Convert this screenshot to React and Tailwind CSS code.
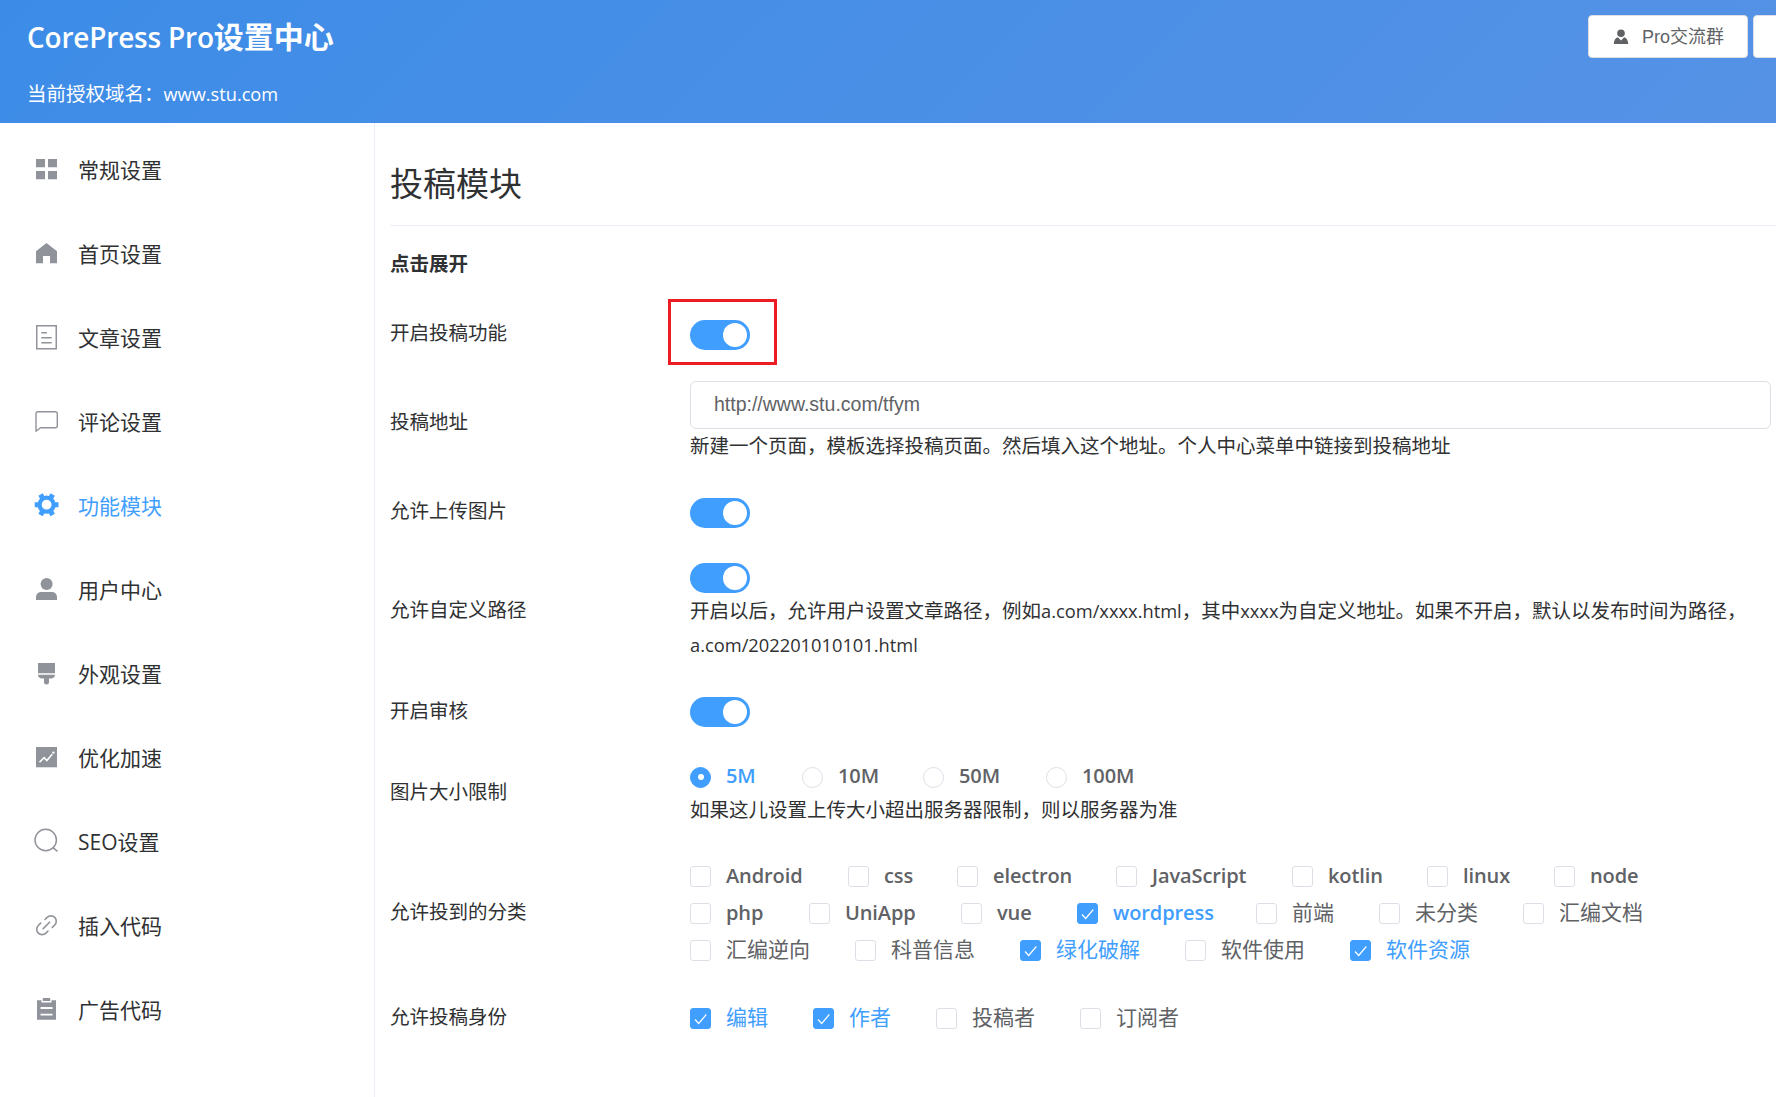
import React, { useState } from "react";

const icons = {
  menu: (
    <path
      fill="currentColor"
      d="M3 3h9v8.3H3zM15 3h9v8.3h-9zM3 15h9v8.3H3zM15 15h9v8.3h-9z"
    />
  ),
  home: (
    <path
      fill="currentColor"
      d="M13.5 3 24 11.2V23.3h-7V16h-7v7.3H3V11.2z"
    />
  ),
  tickets: (
    <g fill="none" stroke="currentColor" strokeWidth="1.5">
      <path d="M3.75 1.75h19.5v23H3.75z" />
      <path d="M8.3 8.7H14M8.3 13.7h10.4M8.3 18.7h10.4" />
    </g>
  ),
  chat: (
    <path
      fill="none"
      stroke="currentColor"
      strokeWidth="1.4"
      strokeLinejoin="round"
      d="M5 3.7h17.3a2 2 0 0 1 2 2v12a2 2 0 0 1-2 2H7.5L3 23.3V5.7a2 2 0 0 1 2-2z"
    />
  ),
  gear: (
    <g fill="none" stroke="currentColor">
      <circle cx="13.6" cy="12.7" r="7" strokeWidth="4.2" />
      <path
        strokeWidth="5"
        d="M1.7 12.7h4.5M21 12.7h4.5M7.5 2.4l2.2 3.8M19.7 2.4l-2.2 3.8M7.5 23l2.2-3.8M19.7 23l-2.2-3.8"
      />
    </g>
  ),
  user: (
    <g fill="currentColor">
      <circle cx="13.6" cy="8" r="6" />
      <path d="M3 24v-3a5 5 0 0 1 5-5h11a5 5 0 0 1 5 5v3z" />
    </g>
  ),
  brush: (
    <path
      fill="currentColor"
      d="M5 3h17v10.3H5zM5 14.8h17c0 2-1.4 3.6-3.4 3.6H16V22a2.5 2.5 0 0 1-5 0v-3.6H8.4C6.4 18.4 5 16.8 5 14.8z"
    />
  ),
  chart: (
    <>
      <path fill="currentColor" d="M3 3h21v20.3H3z" />
      <path
        fill="none"
        stroke="#fff"
        strokeWidth="1.6"
        d="M6.5 18.2l4.6-4.6 2.8 2.9 5.3-6.2"
      />
      <circle cx="20.4" cy="8.6" r="1.2" fill="#fff" />
    </>
  ),
  search: (
    <g fill="none" stroke="currentColor" strokeWidth="1.5">
      <circle cx="12.7" cy="12" r="10.7" />
      <path d="M19.8 19.4l4.6 4" />
    </g>
  ),
  link: (
    <g
      fill="none"
      stroke="currentColor"
      strokeWidth="1.6"
      strokeLinecap="round"
    >
      <path d="M12 7.5l2.1-2.1a5.3 5.3 0 0 1 7.6 7.6l-2.4 2.4" />
      <path d="M15 19l-2.1 2.1a5.3 5.3 0 0 1-7.6-7.6l2.4-2.4" />
      <path d="M10.2 16.6l6.4-6.4" />
    </g>
  ),
  order: (
    <>
      <path
        fill="currentColor"
        d="M4 4.2h4.5v2.3h10V4.2H23v19.6H4zM9.8 2h7.4v2.900H9.800z"
      />
      <path stroke="#fff" strokeWidth="1.8" d="M7.5 12h12M7.5 18.7h12" />
    </>
  ),
};

const menus = [
  { icon: "menu", text: "常规设置" },
  { icon: "home", text: "首页设置" },
  { icon: "tickets", text: "文章设置" },
  { icon: "chat", text: "评论设置" },
  { icon: "gear", text: "功能模块" },
  { icon: "user", text: "用户中心" },
  { icon: "brush", text: "外观设置" },
  { icon: "chart", text: "优化加速" },
  { icon: "search", text: "SEO设置" },
  { icon: "link", text: "插入代码" },
  { icon: "order", text: "广告代码" },
];

const sizes = [
  { text: "5M", width: "w-[112px]" },
  { text: "10M", width: "w-[121px]" },
  { text: "50M", width: "w-[123px]" },
  { text: "100M", width: "w-[123px]" },
];

const categoryRows = [
  [
    { text: "Android", width: "w-[158px]" },
    { text: "css", width: "w-[109px]" },
    { text: "electron", width: "w-[159px]" },
    { text: "JavaScript", width: "w-[176px]" },
    { text: "kotlin", width: "w-[135px]" },
    { text: "linux", width: "w-[127px]" },
    { text: "node", width: "w-[127px]" },
  ],
  [
    { text: "php", width: "w-[119px]" },
    { text: "UniApp", width: "w-[152px]" },
    { text: "vue", width: "w-[116px]" },
    { text: "wordpress", width: "w-[179px]" },
    { text: "前端", width: "w-[123px]" },
    { text: "未分类", width: "w-[144px]" },
    { text: "汇编文档", width: "w-[165px]" },
  ],
  [
    { text: "汇编逆向", width: "w-[165px]" },
    { text: "科普信息", width: "w-[165px]" },
    { text: "绿化破解", width: "w-[165px]" },
    { text: "软件使用", width: "w-[165px]" },
    { text: "软件资源", width: "w-[165px]" },
  ],
];

const roles = [
  { text: "编辑", width: "w-[123px]" },
  { text: "作者", width: "w-[123px]" },
  { text: "投稿者", width: "w-[144px]" },
  { text: "订阅者", width: "w-[144px]" },
];

const Switch = () => {
  const [on, setOn] = useState(true);
  return (
    <button
      type="button"
      onClick={() => setOn(!on)}
      className={`flex h-[30px] w-[60px] shrink-0 cursor-pointer items-center rounded-full px-[3px] ${
        on ? "justify-end bg-[#409eff]" : "justify-start bg-[#dcdfe6]"
      }`}
    >
      <span className="size-6 rounded-full bg-white" />
    </button>
  );
};

const labelFont = (text) =>
  /^[\w]+$/.test(text)
    ? "mb-[2px] text-[20px] font-semibold tracking-[-0.1px]"
    : "mb-[3px] text-[21px]";

const Checkbox = ({ text, width, checked, onChange }) => (
  <label className={`flex h-[37px] cursor-pointer items-center ${width}`}>
    <input
      type="checkbox"
      className="sr-only"
      checked={checked}
      onChange={onChange}
    />
    <span
      className={`flex size-[21px] shrink-0 items-center justify-center rounded-[3px] border ${
        checked ? "border-[#409eff] bg-[#409eff]" : "border-[#dcdfe6] bg-white"
      }`}
    >
      {checked ? (
        <svg width="19" height="19" fill="none" stroke="#fff">
          <path strokeWidth="1.2" d="M4 10.5l3.7 4 7.6-9" />
        </svg>
      ) : null}
    </span>
    <span
      className={`pl-[15px] leading-[34px] whitespace-nowrap ${labelFont(text)} ${
        checked ? "text-[#409eff]" : "text-[#606266]"
      }`}
    >
      {text}
    </span>
  </label>
);

const Row = ({ label, height, children }) => (
  <div className={`flex items-center ${height}`}>
    <div className="w-[300px] shrink-0">{label}</div>
    <div className="min-w-0 flex-1">{children}</div>
  </div>
);

const App = () => {
  const [active, setActive] = useState("功能模块");
  const [url, setUrl] = useState("http://www.stu.com/tfym");
  const [size, setSize] = useState("5M");
  const [checked, setChecked] = useState([
    "wordpress",
    "绿化破解",
    "软件资源",
    "编辑",
    "作者",
  ]);

  const toggle = (text) => {
    setChecked(
      checked.includes(text)
        ? checked.filter((t) => t !== text)
        : [...checked, text]
    );
  };

  return (
    <div className="flex h-[1097px] w-full flex-col overflow-hidden bg-white font-['Open_Sans','Noto_Sans_CJK_SC',sans-serif] text-[19.5px] text-[#303133]">
      <header className="flex h-[123px] shrink-0 justify-between bg-linear-135 from-[#3c8ce7] to-[#5592e6] pl-[27px] text-white">
        <div>
          <h1 className="mt-[16px] text-[30px] leading-[42px] font-bold">
            <span className="text-[28px] font-semibold tracking-[-0.2px]">
              CorePress Pro
            </span>
            设置中心
          </h1>
          <div className="mt-[19px] leading-[34px]">
            当前授权域名：<span className="text-[18.2px]">www.stu.com</span>
          </div>
        </div>
        <div className="flex w-[188px] gap-[5px] overflow-hidden pt-[15px]">
          <button
            type="button"
            className="flex h-[43px] w-[160px] shrink-0 cursor-pointer items-center rounded-[4px] border border-[#dcdfe6] bg-white pl-[24px] font-['Liberation_Sans','Noto_Sans_CJK_SC',sans-serif] text-[18px] text-[#606266]"
          >
            <svg width="16" height="16" fill="currentColor" className="mr-[13px]">
              <circle cx="8" cy="4.2" r="3.8" />
              <path d="M.8 15c0-3.500 1.700-6 4-6.700L8 11.500l3.200-3.200c2.300.7 4 3.200 4 6.700z" />
            </svg>
            <span className="pt-px">Pro交流群</span>
          </button>
          <button
            type="button"
            className="h-[43px] w-[160px] shrink-0 cursor-pointer rounded-[4px] border border-[#dcdfe6] bg-white"
          />
        </div>
      </header>

      <div className="flex min-h-0 flex-1">
        <nav className="w-[375px] shrink-0 border-r border-[#ebeef5] pt-[6px]">
          {menus.map((m) => (
            <div
              key={m.text}
              onClick={() => setActive(m.text)}
              className={`flex h-[84px] cursor-pointer items-center pl-[33px] text-[21px] ${
                active === m.text ? "text-[#409eff]" : ""
              }`}
            >
              <svg
                width="27"
                height="27"
                className={`mr-[18px] mb-[3px] ${
                  active === m.text ? "" : "text-[#909399]"
                }`}
              >
                {icons[m.icon]}
              </svg>
              {m.text}
            </div>
          ))}
        </nav>

        <main className="min-w-0 flex-1 pl-[15px]">
          <h2 className="flex h-[103px] items-center border-b border-[#ebeef5] pt-[20px] text-[33px]">
            投稿模块
          </h2>
          <div className="flex h-[64px] items-center pt-[11px] font-bold">
            点击展开
          </div>

          <div className="pr-[5px]">
            <Row label="开启投稿功能" height="h-[86px]">
              <div className="mb-[2px] -ml-[22px] flex h-[66px] w-[109px] items-center border-[3px] border-[#ed1c24] pt-[6px] pl-[19px]">
                <Switch />
              </div>
            </Row>
            <Row label="投稿地址" height="h-[91px]">
              <input
                type="text"
                value={url}
                onChange={(e) => setUrl(e.target.value)}
                className="block h-[48px] w-full rounded-[6px] border border-[#dcdfe6] px-[23px] font-['Liberation_Sans',sans-serif] text-[19.5px] text-[#606266] focus:outline-none"
              />
              <p className="leading-[34px]">
                新建一个页面，模板选择投稿页面。然后填入这个地址。个人中心菜单中链接到投稿地址
              </p>
            </Row>
            <Row label="允许上传图片" height="h-[88px]">
              <div className="pt-1">
                <Switch />
              </div>
            </Row>
            <Row label="允许自定义路径" height="h-[110px]">
              <div className="pt-[4px] pb-px">
                <Switch />
              </div>
              <p className="leading-[34px]">
                开启以后，允许用户设置文章路径，例如
                <span className="text-[18.3px]">a.com/xxxx.html</span>，其中
                <span className="text-[18.3px]">xxxx</span>
                为自定义地址。如果不开启，默认以发布时间为路径，
                <br />
                <span className="text-[18.3px]">a.com/202201010101.html</span>
              </p>
            </Row>
            <Row label="开启审核" height="h-[92px]">
              <div className="pt-[2px]">
                <Switch />
              </div>
            </Row>
            <Row label="图片大小限制" height="h-[70px]">
              <div className="flex pt-[3px]">
                {sizes.map((s) => (
                  <label
                    key={s.text}
                    className={`flex h-[32px] cursor-pointer items-center ${s.width}`}
                  >
                    <input
                      type="radio"
                      name="size"
                      className="sr-only"
                      checked={size === s.text}
                      onChange={() => setSize(s.text)}
                    />
                    <span
                      className={`mt-px flex size-[21px] shrink-0 items-center justify-center rounded-full border ${
                        size === s.text
                          ? "border-[#409eff] bg-[#409eff]"
                          : "border-[#dcdfe6] bg-white"
                      }`}
                    >
                      <span className="size-[6px] rounded-full bg-white" />
                    </span>
                    <span
                      className={`mb-[2px] pl-[15px] text-[20px] font-semibold tracking-[-0.1px] ${
                        size === s.text ? "text-[#409eff]" : "text-[#606266]"
                      }`}
                    >
                      {s.text}
                    </span>
                  </label>
                ))}
              </div>
              <p className="leading-[34px]">
                如果这儿设置上传大小超出服务器限制，则以服务器为准
              </p>
            </Row>
            <div className="pt-4">
              <Row label="允许投到的分类" height="h-[138px]">
                <div className="pt-[3px]">
                  {categoryRows.map((row, i) => (
                    <div key={i} className="flex">
                      {row.map((c) => (
                        <Checkbox
                          key={c.text}
                          {...c}
                          checked={checked.includes(c.text)}
                          onChange={() => toggle(c.text)}
                        />
                      ))}
                    </div>
                  ))}
                </div>
              </Row>
            </div>
            <Row label="允许投稿身份" height="h-[72px]">
              <div className="flex pt-[2px]">
                {roles.map((r) => (
                  <Checkbox
                    key={r.text}
                    {...r}
                    checked={checked.includes(r.text)}
                    onChange={() => toggle(r.text)}
                  />
                ))}
              </div>
            </Row>
          </div>
        </main>
      </div>
    </div>
  );
};

export default App;
